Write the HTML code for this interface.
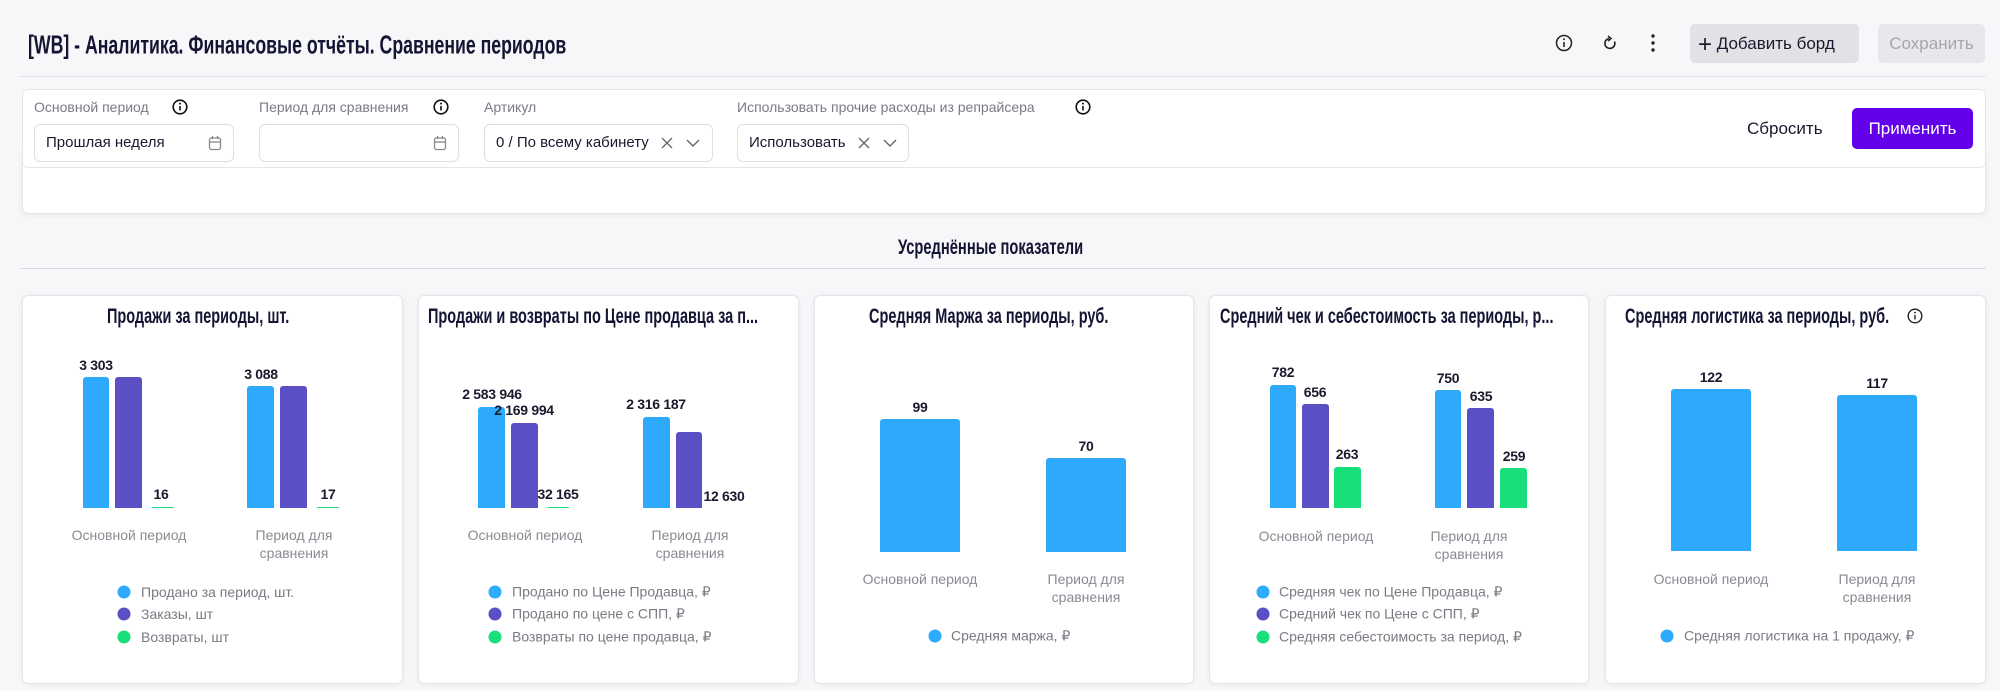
<!DOCTYPE html>
<html><head><meta charset="utf-8">
<style>
*{margin:0;padding:0;box-sizing:border-box}
body{width:2000px;height:691px;overflow:hidden;background:#f7f7f9;font-family:"Liberation Sans",sans-serif;position:relative;color:#1a1a2e}
.a{position:absolute}
.cond{display:inline-block;transform-origin:0 50%;white-space:nowrap}
.card{position:absolute;background:#fff;border:1px solid #e6e6ea;border-radius:6px;box-shadow:0 1px 6px rgba(0,0,0,.06)}
.lbl{position:absolute;font-size:14px;color:#7a7a85;white-space:nowrap;transform:translateY(-50%)}
.inp{position:absolute;top:124px;height:38px;border:1px solid #dedee3;border-radius:6px;background:#fff;font-size:15px;color:#1a1a2e;padding-left:11px;line-height:36px;white-space:nowrap}
.bar{position:absolute;border-radius:3px 3px 0 0}
.b{background:#2eaafc}.p{background:#5a4fc5}.g{background:#18df7a}
.v{position:absolute;font-weight:bold;font-size:14px;color:#1a1a2e;transform:translate(-50%,-50%);white-space:nowrap;letter-spacing:-.3px}
.ax{position:absolute;font-size:14px;color:#8a8a94;text-align:center;transform:translateX(-50%);line-height:18px;white-space:nowrap}
.lg{position:absolute;font-size:14px;color:#7a7a84;white-space:nowrap;transform:translateY(-50%)}
.dot{position:absolute;width:13px;height:13px;border-radius:50%;transform:translate(-50%,-50%)}
.ct{position:absolute;font-size:21px;font-weight:bold;color:#141433;white-space:nowrap;transform:translateY(-50%)}
.ct .cond{transform:scaleX(.69)}
</style></head><body>

<div class="a" style="left:28px;top:45px;transform:translateY(-50%);font-size:26px;font-weight:bold;color:#141433"><span class="cond" style="transform:scaleX(.68)">[WB] - Аналитика. Финансовые отчёты. Сравнение периодов</span></div>

<svg class="a" style="left:1555px;top:34px" width="18" height="18" viewBox="0 0 18 18"><circle cx="9" cy="9" r="7.5" fill="none" stroke="#222" stroke-width="1.5"/><line x1="9" y1="8" x2="9" y2="13" stroke="#222" stroke-width="1.6"/><circle cx="9" cy="5.3" r="1" fill="#222"/></svg>
<svg class="a" style="left:1601px;top:34px" width="18" height="18" viewBox="0 0 18 18"><path d="M13.5 7.5A5 5 0 1 1 8 4.5" fill="none" stroke="#222" stroke-width="1.6"/><path d="M7 2l3 2.5-3 2.5" fill="none" stroke="#222" stroke-width="1.6"/></svg>
<svg class="a" style="left:1648px;top:33px" width="10" height="20" viewBox="0 0 10 20"><circle cx="5" cy="3" r="1.7" fill="#222"/><circle cx="5" cy="10" r="1.7" fill="#222"/><circle cx="5" cy="17" r="1.7" fill="#222"/></svg>
<div class="a" style="left:1690px;top:24px;width:169px;height:39px;background:#e1e1e6;border-radius:5px;font-size:17px;line-height:39px;color:#1a1a2e;padding-left:8px;white-space:nowrap"><span style="font-size:24px;vertical-align:-3px;font-weight:300">+</span> Добавить борд</div>
<div class="a" style="left:1878px;top:24px;width:107px;height:39px;background:#e8e8ec;border-radius:5px;font-size:17px;line-height:39px;color:#a5a5ae;text-align:center">Сохранить</div>
<div class="a" style="left:20px;top:76px;width:1966px;height:1px;background:#e2e2e6"></div>

<div class="card" style="left:22px;top:150px;width:1964px;height:64px;border-top:none;border-radius:0 0 6px 6px"></div>
<div class="card" style="left:22px;top:89px;width:1964px;height:79px;box-shadow:none"></div>

<div class="lbl" style="left:34px;top:107px">Основной период</div>
<svg class="a" style="left:172px;top:99px" width="16" height="16" viewBox="0 0 16 16"><circle cx="8" cy="8" r="6.8" fill="none" stroke="#111" stroke-width="1.6"/><line x1="8" y1="7" x2="8" y2="11.5" stroke="#111" stroke-width="1.6"/><circle cx="8" cy="4.6" r="1" fill="#111"/></svg>
<div class="lbl" style="left:259px;top:107px">Период для сравнения</div>
<svg class="a" style="left:433px;top:99px" width="16" height="16" viewBox="0 0 16 16"><circle cx="8" cy="8" r="6.8" fill="none" stroke="#111" stroke-width="1.6"/><line x1="8" y1="7" x2="8" y2="11.5" stroke="#111" stroke-width="1.6"/><circle cx="8" cy="4.6" r="1" fill="#111"/></svg>
<div class="lbl" style="left:484px;top:107px">Артикул</div>
<div class="lbl" style="left:737px;top:107px">Использовать прочие расходы из репрайсера</div>
<svg class="a" style="left:1075px;top:99px" width="16" height="16" viewBox="0 0 16 16"><circle cx="8" cy="8" r="6.8" fill="none" stroke="#111" stroke-width="1.6"/><line x1="8" y1="7" x2="8" y2="11.5" stroke="#111" stroke-width="1.6"/><circle cx="8" cy="4.6" r="1" fill="#111"/></svg>

<div class="inp" style="left:34px;width:200px">Прошлая неделя</div>
<svg class="a" style="left:208px;top:135px" width="14" height="16" viewBox="0 0 14 16"><rect x="1.5" y="3" width="11" height="11.5" rx="2" fill="none" stroke="#888" stroke-width="1.3"/><line x1="1.5" y1="7" x2="12.5" y2="7" stroke="#888" stroke-width="1.3"/><line x1="4.5" y1="1" x2="4.5" y2="4" stroke="#888" stroke-width="1.3"/><line x1="9.5" y1="1" x2="9.5" y2="4" stroke="#888" stroke-width="1.3"/></svg>
<div class="inp" style="left:259px;width:200px"></div>
<svg class="a" style="left:433px;top:135px" width="14" height="16" viewBox="0 0 14 16"><rect x="1.5" y="3" width="11" height="11.5" rx="2" fill="none" stroke="#888" stroke-width="1.3"/><line x1="1.5" y1="7" x2="12.5" y2="7" stroke="#888" stroke-width="1.3"/><line x1="4.5" y1="1" x2="4.5" y2="4" stroke="#888" stroke-width="1.3"/><line x1="9.5" y1="1" x2="9.5" y2="4" stroke="#888" stroke-width="1.3"/></svg>
<div class="inp" style="left:484px;width:229px">0 / По всему кабинету</div>
<svg class="a" style="left:660px;top:136px" width="14" height="14" viewBox="0 0 14 14"><path d="M2 2l10 10M12 2L2 12" stroke="#666" stroke-width="1.3"/></svg>
<svg class="a" style="left:685px;top:136px" width="16" height="14" viewBox="0 0 16 14"><path d="M2 4l6 6 6-6" fill="none" stroke="#666" stroke-width="1.4"/></svg>
<div class="inp" style="left:737px;width:172px">Использовать</div>
<svg class="a" style="left:857px;top:136px" width="14" height="14" viewBox="0 0 14 14"><path d="M2 2l10 10M12 2L2 12" stroke="#666" stroke-width="1.3"/></svg>
<svg class="a" style="left:882px;top:136px" width="16" height="14" viewBox="0 0 16 14"><path d="M2 4l6 6 6-6" fill="none" stroke="#666" stroke-width="1.4"/></svg>

<div class="a" style="left:1747px;top:129px;transform:translateY(-50%);font-size:17px;color:#1a1a2e">Сбросить</div>
<div class="a" style="left:1852px;top:108px;width:121px;height:41px;background:#6200ea;border-radius:5px;color:#fff;font-size:17px;line-height:41px;text-align:center">Применить</div>

<div class="a" style="left:898px;top:248px;transform:translateY(-50%);font-size:21px;font-weight:bold;color:#141433"><span class="cond" style="transform:scaleX(.7)">Усреднённые показатели</span></div>
<div class="a" style="left:20px;top:268px;width:1966px;height:1px;background:#dcdce0"></div>

<!-- cards -->
<div class="card" style="left:22px;top:295px;width:381px;height:389px"></div>
<div class="card" style="left:418px;top:295px;width:381px;height:389px"></div>
<div class="card" style="left:814px;top:295px;width:380px;height:389px"></div>
<div class="card" style="left:1209px;top:295px;width:380px;height:389px"></div>
<div class="card" style="left:1605px;top:295px;width:381px;height:389px"></div>

<!-- card 1 -->
<div class="ct" style="left:107px;top:317px"><span class="cond">Продажи за периоды, шт.</span></div>
<div class="bar b" style="left:83px;top:377px;width:26px;height:131px"></div>
<div class="bar p" style="left:115px;top:377px;width:27px;height:131px"></div>
<div class="bar g" style="left:152px;top:507px;width:22px;height:1px"></div>
<div class="bar b" style="left:247px;top:386px;width:27px;height:122px"></div>
<div class="bar p" style="left:280px;top:386px;width:27px;height:122px"></div>
<div class="bar g" style="left:317px;top:507px;width:22px;height:1px"></div>
<div class="v" style="left:96px;top:365px">3 303</div>
<div class="v" style="left:261px;top:374px">3 088</div>
<div class="v" style="left:161px;top:494px">16</div>
<div class="v" style="left:328px;top:494px">17</div>
<div class="ax" style="left:129px;top:526px">Основной период</div>
<div class="ax" style="left:294px;top:526px">Период для<br>сравнения</div>
<div class="dot b" style="left:124px;top:592px"></div><div class="lg" style="left:141px;top:592px">Продано за период, шт.</div>
<div class="dot p" style="left:124px;top:614px"></div><div class="lg" style="left:141px;top:614px">Заказы, шт</div>
<div class="dot g" style="left:124px;top:637px"></div><div class="lg" style="left:141px;top:637px">Возвраты, шт</div>

<!-- card 2 -->
<div class="ct" style="left:428px;top:317px"><span class="cond">Продажи и возвраты по Цене продавца за п...</span></div>
<div class="bar b" style="left:478px;top:407px;width:27px;height:101px"></div>
<div class="bar p" style="left:511px;top:423px;width:27px;height:85px"></div>
<div class="bar g" style="left:547px;top:507px;width:22px;height:1px"></div>
<div class="bar b" style="left:643px;top:417px;width:27px;height:91px"></div>
<div class="bar p" style="left:676px;top:432px;width:26px;height:76px"></div>
<div class="v" style="left:492px;top:394px">2 583 946</div>
<div class="v" style="left:524px;top:410px">2 169 994</div>
<div class="v" style="left:558px;top:494px">32 165</div>
<div class="v" style="left:656px;top:404px">2 316 187</div>
<div class="v" style="left:724px;top:496px">12 630</div>
<div class="ax" style="left:525px;top:526px">Основной период</div>
<div class="ax" style="left:690px;top:526px">Период для<br>сравнения</div>
<div class="dot b" style="left:495px;top:592px"></div><div class="lg" style="left:512px;top:592px">Продано по Цене Продавца, ₽</div>
<div class="dot p" style="left:495px;top:614px"></div><div class="lg" style="left:512px;top:614px">Продано по цене с СПП, ₽</div>
<div class="dot g" style="left:495px;top:637px"></div><div class="lg" style="left:512px;top:637px">Возвраты по цене продавца, ₽</div>

<!-- card 3 -->
<div class="ct" style="left:869px;top:317px"><span class="cond">Средняя Маржа за периоды, руб.</span></div>
<div class="bar b" style="left:880px;top:419px;width:80px;height:133px"></div>
<div class="bar b" style="left:1046px;top:458px;width:80px;height:94px"></div>
<div class="v" style="left:920px;top:407px">99</div>
<div class="v" style="left:1086px;top:446px">70</div>
<div class="ax" style="left:920px;top:570px">Основной период</div>
<div class="ax" style="left:1086px;top:570px">Период для<br>сравнения</div>
<div class="dot b" style="left:935px;top:636px"></div><div class="lg" style="left:951px;top:636px">Средняя маржа, ₽</div>

<!-- card 4 -->
<div class="ct" style="left:1220px;top:317px"><span class="cond">Средний чек и себестоимость за периоды, р...</span></div>
<div class="bar b" style="left:1270px;top:385px;width:26px;height:123px"></div>
<div class="bar p" style="left:1302px;top:404px;width:27px;height:104px"></div>
<div class="bar g" style="left:1334px;top:467px;width:27px;height:41px"></div>
<div class="bar b" style="left:1435px;top:390px;width:26px;height:118px"></div>
<div class="bar p" style="left:1467px;top:408px;width:27px;height:100px"></div>
<div class="bar g" style="left:1500px;top:468px;width:27px;height:40px"></div>
<div class="v" style="left:1283px;top:372px">782</div>
<div class="v" style="left:1315px;top:392px">656</div>
<div class="v" style="left:1347px;top:454px">263</div>
<div class="v" style="left:1448px;top:378px">750</div>
<div class="v" style="left:1481px;top:396px">635</div>
<div class="v" style="left:1514px;top:456px">259</div>
<div class="ax" style="left:1316px;top:527px">Основной период</div>
<div class="ax" style="left:1469px;top:527px">Период для<br>сравнения</div>
<div class="dot b" style="left:1263px;top:592px"></div><div class="lg" style="left:1279px;top:592px">Средняя чек по Цене Продавца, ₽</div>
<div class="dot p" style="left:1263px;top:614px"></div><div class="lg" style="left:1279px;top:614px">Средний чек по Цене с СПП, ₽</div>
<div class="dot g" style="left:1263px;top:637px"></div><div class="lg" style="left:1279px;top:637px">Средняя себестоимость за период, ₽</div>

<!-- card 5 -->
<div class="ct" style="left:1625px;top:317px"><span class="cond">Средняя логистика за периоды, руб.</span></div>
<svg class="a" style="left:1907px;top:308px" width="16" height="16" viewBox="0 0 16 16"><circle cx="8" cy="8" r="6.8" fill="none" stroke="#222" stroke-width="1.4"/><line x1="8" y1="7" x2="8" y2="11.5" stroke="#222" stroke-width="1.4"/><circle cx="8" cy="4.6" r=".9" fill="#222"/></svg>
<div class="bar b" style="left:1671px;top:389px;width:80px;height:162px"></div>
<div class="bar b" style="left:1837px;top:395px;width:80px;height:156px"></div>
<div class="v" style="left:1711px;top:377px">122</div>
<div class="v" style="left:1877px;top:383px">117</div>
<div class="ax" style="left:1711px;top:570px">Основной период</div>
<div class="ax" style="left:1877px;top:570px">Период для<br>сравнения</div>
<div class="dot b" style="left:1667px;top:636px"></div><div class="lg" style="left:1684px;top:636px">Средняя логистика на 1 продажу, ₽</div>

</body></html>
